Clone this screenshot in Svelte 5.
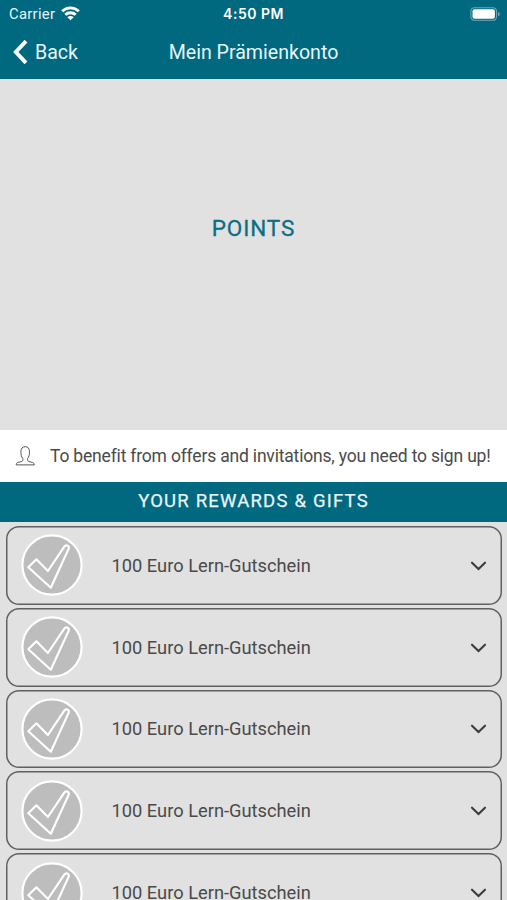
<script lang="ts">
  const rewards: string[] = Array(5).fill('100 Euro Lern-Gutschein');
</script>

<div class="screen">
  <header>
    <div class="status">
      <div class="carrier">
        <span>Carrier</span>
        <svg class="wifi" width="19" height="15" viewBox="0 0 19 15" fill="none" stroke="#fff" stroke-width="2.9">
          <path d="M1.2 5.3C5.9 0.7 13.1 0.7 17.8 5.3" />
          <path d="M4.3 8.8C7.3 6 11.7 6 14.7 8.8" />
          <path d="M9.5 14.3L6.3 11.3C8.1 9.7 10.9 9.7 12.7 11.3Z" fill="#fff" stroke="none" />
        </svg>
      </div>
      <div class="time">4:50 PM</div>
      <svg class="battery" width="31" height="14" viewBox="0 0 31 14">
        <rect x="0.9" y="0.7" width="25.6" height="12.6" rx="3.6" fill="none" stroke="#6fa9b8" stroke-width="1.1" />
        <rect x="2.5" y="2.3" width="22.4" height="9.4" rx="2" fill="#fff" />
        <path d="M28 4.7C30.3 5.5 30.3 8.5 28 9.3Z" fill="#6fa9b8" />
      </svg>
    </div>
    <div class="nav">
      <div class="back">
        <svg width="16" height="25" viewBox="0 0 16 25" fill="none" stroke="#fff" stroke-width="3.9">
          <path d="M14 1.2L3.8 12L14 22.8" />
        </svg>
        <span>Back</span>
      </div>
      <div class="title">Mein Prämienkonto</div>
    </div>
  </header>

  <div class="points">POINTS</div>

  <div class="signup">
    <svg width="20" height="20" viewBox="0 0 20 20" fill="none" stroke="#555" stroke-width="1">
      <path d="M7.8 12.4C6.3 10.7 5.9 8.4 5.9 5.7C5.9 2.5 7.4 0.7 10.2 0.7S14.5 2.5 14.5 5.7C14.5 8.4 14.1 10.7 12.6 12.4C12.4 14.4 12.6 15.1 14.1 15.6L17.3 16.4C18.6 16.8 19.3 17.5 19.3 18.9H1.2C1.2 17.5 1.8 16.8 3.1 16.4L6.3 15.6C7.8 15.1 8 14.4 7.8 12.4Z" />
    </svg>
    <span>To benefit from offers and invitations, you need to sign up!</span>
  </div>

  <h2>YOUR REWARDS &amp; GIFTS</h2>

  <div class="list">
    {#each rewards as reward}
      <div class="card">
        <svg class="check" width="62" height="62" viewBox="0 0 62 62" stroke="#fff">
          <circle cx="31" cy="31" r="29.6" fill="#bdbdbd" stroke-width="2.2" />
          <path
            d="M7.3 33.3L15.4 25.3L26.9 37L43.3 12.6C45.1 10.2 48.8 12.2 47.6 14.9L29.8 53.7Z"
            fill="none"
            stroke-width="2.2"
            stroke-linejoin="round"
          />
        </svg>
        <span class="name">{reward}</span>
        <svg class="chevron" width="17" height="11" viewBox="0 0 17 11" fill="none" stroke="#3c3c3c" stroke-width="2.1" stroke-linecap="round">
          <path d="M2 2.7L8.5 9L15 2.7" />
        </svg>
      </div>
    {/each}
  </div>
</div>

<style>
  :global(body) {
    background: #e1e1e1;
    overflow: hidden;
  }
  .screen {
    height: 900px;
    overflow: hidden;
    background: #e1e1e1;
    color: #4a4a4a;
    font-family: Roboto, "Liberation Sans", sans-serif;
  }
  header {
    height: 79px;
    background: #00687f;
    color: #e9f5f8;
  }
  .status {
    height: 27px;
    display: grid;
    grid-template-columns: 1fr auto 1fr;
    align-items: center;
    padding: 0 6px 0 9px;
    box-sizing: border-box;
  }
  .carrier {
    display: flex;
    align-items: center;
    gap: 6px;
    font-size: 14.8px;
    letter-spacing: 0.3px;
  }
  .time {
    margin-right: 3px;
    font-family: Inter, sans-serif;
    font-size: 14px;
    font-weight: 600;
    letter-spacing: 0.5px;
    color: #fff;
  }
  .battery {
    justify-self: end;
  }
  .nav {
    height: 50px;
    display: grid;
    grid-template-columns: 1fr auto 1fr;
    align-items: center;
    padding: 0 12px;
    font-size: 19.6px;
  }
  .back {
    display: flex;
    align-items: center;
    gap: 7px;
  }
  .points {
    height: 351px;
    display: flex;
    align-items: center;
    justify-content: center;
    box-sizing: border-box;
    padding-bottom: 53px;
    color: #0b6e84;
    font-size: 22.5px;
    letter-spacing: 0.9px;
    -webkit-text-stroke: 0.3px #0b6e84;
  }
  .signup {
    height: 52px;
    display: flex;
    align-items: center;
    gap: 15px;
    padding-left: 15px;
    background: #fff;
    font-size: 17.5px;
    letter-spacing: -0.185px;
    white-space: nowrap;
  }
  h2 {
    height: 40px;
    margin: 0;
    background: #00687f;
    color: #e9f5f8;
    font-size: 18.5px;
    font-weight: 400;
    line-height: 39px;
    letter-spacing: 1.2px;
    text-align: center;
    -webkit-text-stroke: 0.25px #e9f5f8;
  }
  .list {
    display: flex;
    flex-direction: column;
    gap: 3px;
    padding: 4px 5px 0 5.5px;
  }
  .card {
    height: 78.8px;
    flex-shrink: 0;
    display: flex;
    align-items: center;
    box-sizing: border-box;
    padding: 0 15px;
    box-shadow: inset 0 0 0 1.5px #606060;
    border-radius: 13px;
  }
  .name {
    flex: 1;
    margin-left: 29px;
    font-size: 18.3px;
  }
</style>
